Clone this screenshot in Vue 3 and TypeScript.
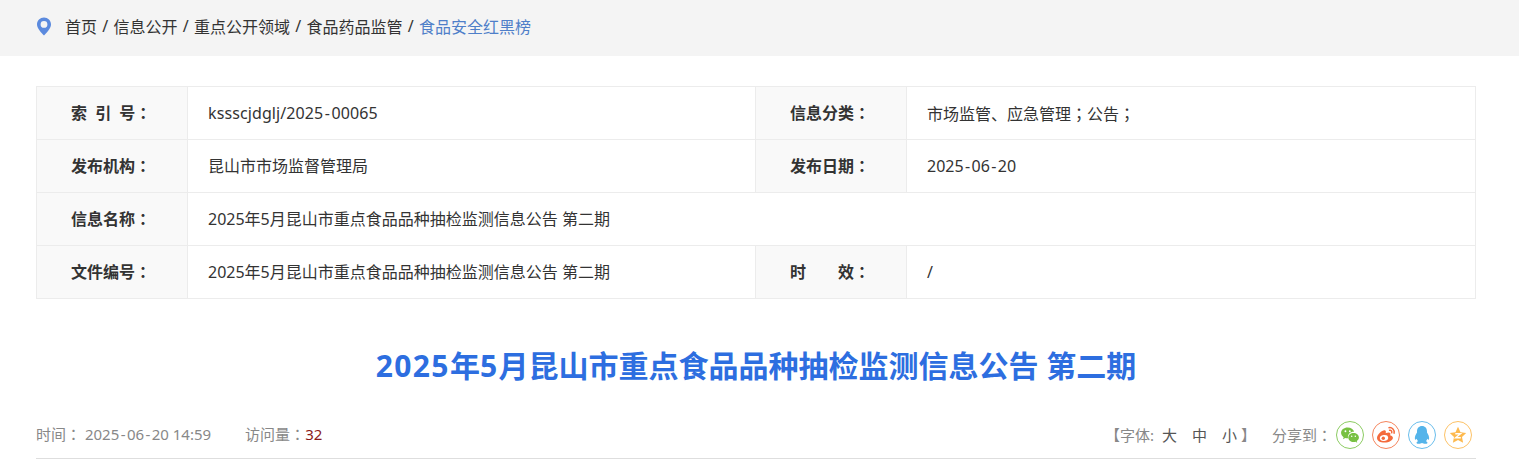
<script setup lang="ts">
const crumbs: string[] = ['首页', '信息公开', '重点公开领域', '食品药品监管']
const title = '2025年5月昆山市重点食品品种抽检监测信息公告 第二期'
</script>

<template>
  <div class="page">
    <div class="crumbbar">
      <svg class="pin" width="16" height="19" viewBox="0 0 16 19">
        <path fill-rule="evenodd" fill="#5b8ade" d="M8 18.500C5.600 15.600 1 11.600 1 7.400 1 3.400 4.100.5 8 .5s7 2.900 7 6.900c0 4.200-4.600 8.200-7 11.100zM8 4a3.400 3.400 0 1 0 0 6.800A3.400 3.400 0 0 0 8 4z"/>
      </svg>
      <template v-for="c in crumbs" :key="c">
        <span class="crumb">{{ c }}</span><span class="sep">/</span>
      </template>
      <span class="crumb current">食品安全红黑榜</span>
    </div>

    <div class="content">
      <table class="info">
        <colgroup>
          <col class="col-label" /><col class="col-value" /><col class="col-label" /><col />
        </colgroup>
        <tbody>
          <tr>
            <th class="spaced">索 引 号<span class="p">：</span></th>
            <td><span class="code">kssscjdglj/2025<span class="hy">-</span>00065</span></td>
            <th>信息分类<span class="p">：</span></th>
            <td>市场监管、应急管理<span class="p">；</span>公告<span class="p">；</span></td>
          </tr>
          <tr>
            <th>发布机构<span class="p">：</span></th>
            <td>昆山市市场监督管理局</td>
            <th>发布日期<span class="p">：</span></th>
            <td>2025<span class="hy">-</span>06<span class="hy">-</span>20</td>
          </tr>
          <tr>
            <th>信息名称<span class="p">：</span></th>
            <td colspan="3">{{ title }}</td>
          </tr>
          <tr>
            <th>文件编号<span class="p">：</span></th>
            <td>{{ title }}</td>
            <th>时<span class="gap"></span>效<span class="p">：</span></th>
            <td>/</td>
          </tr>
        </tbody>
      </table>

      <h1 class="title"><span class="num">2025</span>年<span class="num">5</span>月昆山市重点食品品种抽检监测信息公告 第二期</h1>

      <div class="meta">
        <div class="meta-left">
          <span class="time">时间<span class="p">：</span> 2025<span class="hy">-</span>06<span class="hy">-</span>20 14:59</span>
          <span class="visits">访问量<span class="p">：</span><em>32</em></span>
        </div>
        <div class="meta-right">
          <span class="font-size">【字体:<b>大</b><b>中</b><b class="last">小</b>】</span>
          <span class="share">分享到<span class="p">：</span></span>
          <span class="ico wechat">
            <svg width="20" height="18" viewBox="0 0 20 18">
              <path fill="#78c142" d="M7.500 1C3.600 1 .6 3.500.6 6.700c0 1.900 1 3.400 2.700 4.600l-.7 2.100 2.400-1.300c.8.200 1.500.3 2.400.3h.6a5.300 5.300 0 0 1-.2-1.500c0-3 2.600-5.400 5.900-5.400h.6C13.700 2.800 10.900 1 7.500 1z"/>
              <path fill="#78c142" d="M19.400 11.600c0-2.600-2.600-4.800-5.600-4.800-3.200 0-5.600 2.200-5.600 4.800 0 2.700 2.400 4.800 5.600 4.800.7 0 1.300-.1 2-.3l1.800 1-.5-1.700c1.400-1 2.300-2.300 2.300-3.800z"/>
              <circle cx="5.200" cy="5" r="1" fill="#fff"/><circle cx="9.800" cy="5" r="1" fill="#fff"/>
              <circle cx="11.800" cy="10.400" r=".8" fill="#fff"/><circle cx="15.600" cy="10.400" r=".8" fill="#fff"/>
            </svg>
          </span>
          <span class="ico weibo">
            <svg width="20" height="18" viewBox="0 0 20 18">
              <path fill="#f46a3c" d="M8.300 16.600c-3.700 0-7.300-1.700-7.300-4.600 0-1.500 1-3.300 2.600-4.900C5.900 4.800 8.500 3.700 9.500 4.700c.5.500.5 1.300.2 2.200-.2.500.4.200.4.200 1.900-.8 3.500-.8 4.100 0 .3.500.3 1.100 0 1.800-.1.300 0 .4.300.5 1.100.3 2.400 1 2.400 2.400 0 2.400-3.500 4.800-8.600 4.800z"/>
              <ellipse cx="8" cy="12" rx="4.200" ry="3" fill="#fff" transform="rotate(-8 8 12)"/>
              <circle cx="7.300" cy="12.300" r="1.700" fill="#f46a3c"/>
              <path fill="none" stroke="#f46a3c" stroke-width="1.500" stroke-linecap="round" d="M13 1.700c3-.6 5.800 2 5.100 5.500M13.600 4.300c1.400-.3 2.500 1 2.100 2.400"/>
            </svg>
          </span>
          <span class="ico qq">
            <svg width="18" height="20" viewBox="0 0 18 20">
              <path fill="#54b4ea" d="M9 1C5.800 1 4 3.300 4 6.200v1.300C2.800 9.300 1.600 11.700 1.900 14c.2 1 .8 1 1.700-.2.300 1 .8 1.800 1.500 2.500-1.100.4-1.700 1-1.500 1.600.3.900 2.300 1.100 3.900.7.500-.2 1-.5 1.500-.5s1 .3 1.500.5c1.600.4 3.600.2 3.900-.7.200-.6-.4-1.200-1.500-1.600.7-.7 1.200-1.500 1.500-2.500.9 1.200 1.500 1.200 1.700.2.300-2.300-.9-4.700-2.100-6.500V6.200C14 3.300 12.200 1 9 1z"/>
            </svg>
          </span>
          <span class="ico star">
            <svg width="18" height="18" viewBox="0 0 18 18">
              <path fill="#fdb94e" d="M9 .8l2.500 5.400 5.700.7-4.200 4 1.100 5.900L9 14 3.900 16.800 5 10.900.8 6.900l5.700-.7z"/>
              <path fill="none" stroke="#fff" stroke-width="1.400" d="M6.300 7.700h5.200L6.600 11.800h5.200"/>
            </svg>
          </span>
        </div>
      </div>
    </div>
  </div>
</template>

<style>
html, body { margin: 0; background: #fff; }
</style>

<style scoped>
.page {
  width: 1519px;
  height: 466px;
  overflow: hidden;
  font-family: "Noto Sans", "Noto Sans CJK SC", sans-serif;
  font-size: 16px;
  color: #333;
}
.crumbbar {
  height: 56px;
  background: #f4f4f4;
  padding: 0 0 4px 36px;
  display: flex;
  align-items: center;
  box-sizing: border-box;
}
.pin { margin-right: 13px; }
.crumb { color: #333; }
.sep { margin: 0 5.25px; color: #333; }
.current { color: #4f7fc9; }
.content {
  width: 1440px;
  margin-left: 36px;
  padding-top: 30px;
}
.p { font-family: "Noto Sans CJK TC", sans-serif; }
.hy { padding: 0 1.4px; }
.code { letter-spacing: .1px; }
.info {
  width: 1440px;
  table-layout: fixed;
  border-collapse: collapse;
  font-size: 16px;
}
.col-label { width: 151px; }
.col-value { width: 568px; }
.info th, .info td {
  height: 53px;
  padding: 0;
  border: 1px solid #ececec;
  box-sizing: border-box;
  line-height: 24px;
}
.info th {
  background: #f9f9f9;
  font-weight: 700;
  text-align: left;
  padding: 0 0 1px 34px;
  color: #333;
}
.spaced { word-spacing: 4px; }
.info td { padding-left: 20px; color: #333; }
.gap { display: inline-block; width: 32px; }
.title {
  margin: 43px 0 0;
  text-align: center;
  font-size: 30px;
  line-height: 48px;
  font-weight: 700;
  color: #2d6ee0;
}
.num { letter-spacing: 1.4px; }
.meta {
  margin-top: 24px;
  height: 45px;
  box-sizing: border-box;
  border-bottom: 1px solid #dedede;
  display: flex;
  justify-content: space-between;
  align-items: flex-start;
  font-size: 15px;
  color: #888;
}
.meta-left { display: flex; gap: 34px; line-height: 40px; }
.visits em { font-style: normal; color: #8b1a1a; }
.meta-right { display: flex; align-items: center; height: 41px; padding-right: 4px; }
.font-size b { font-weight: 400; color: #555; margin-left: 8px; margin-right: 7px; }
.font-size b.last { margin-right: 4px; }
.font-size { margin-right: 16px; }
.share { margin-right: 4px; }
.ico {
  width: 28px;
  height: 28px;
  box-sizing: border-box;
  border: 1px solid;
  border-radius: 50%;
  display: flex;
  align-items: center;
  justify-content: center;
  margin-right: 8px;
}
.ico:last-child { margin-right: 0; }
.ico svg { display: block; }
.wechat { border-color: #8ccc62; }
.wechat svg { transform: scale(.95); }
.weibo { border-color: #f5845c; }
.qq { border-color: #68bdec; }
.star { border-color: #fdc266; }
</style>
